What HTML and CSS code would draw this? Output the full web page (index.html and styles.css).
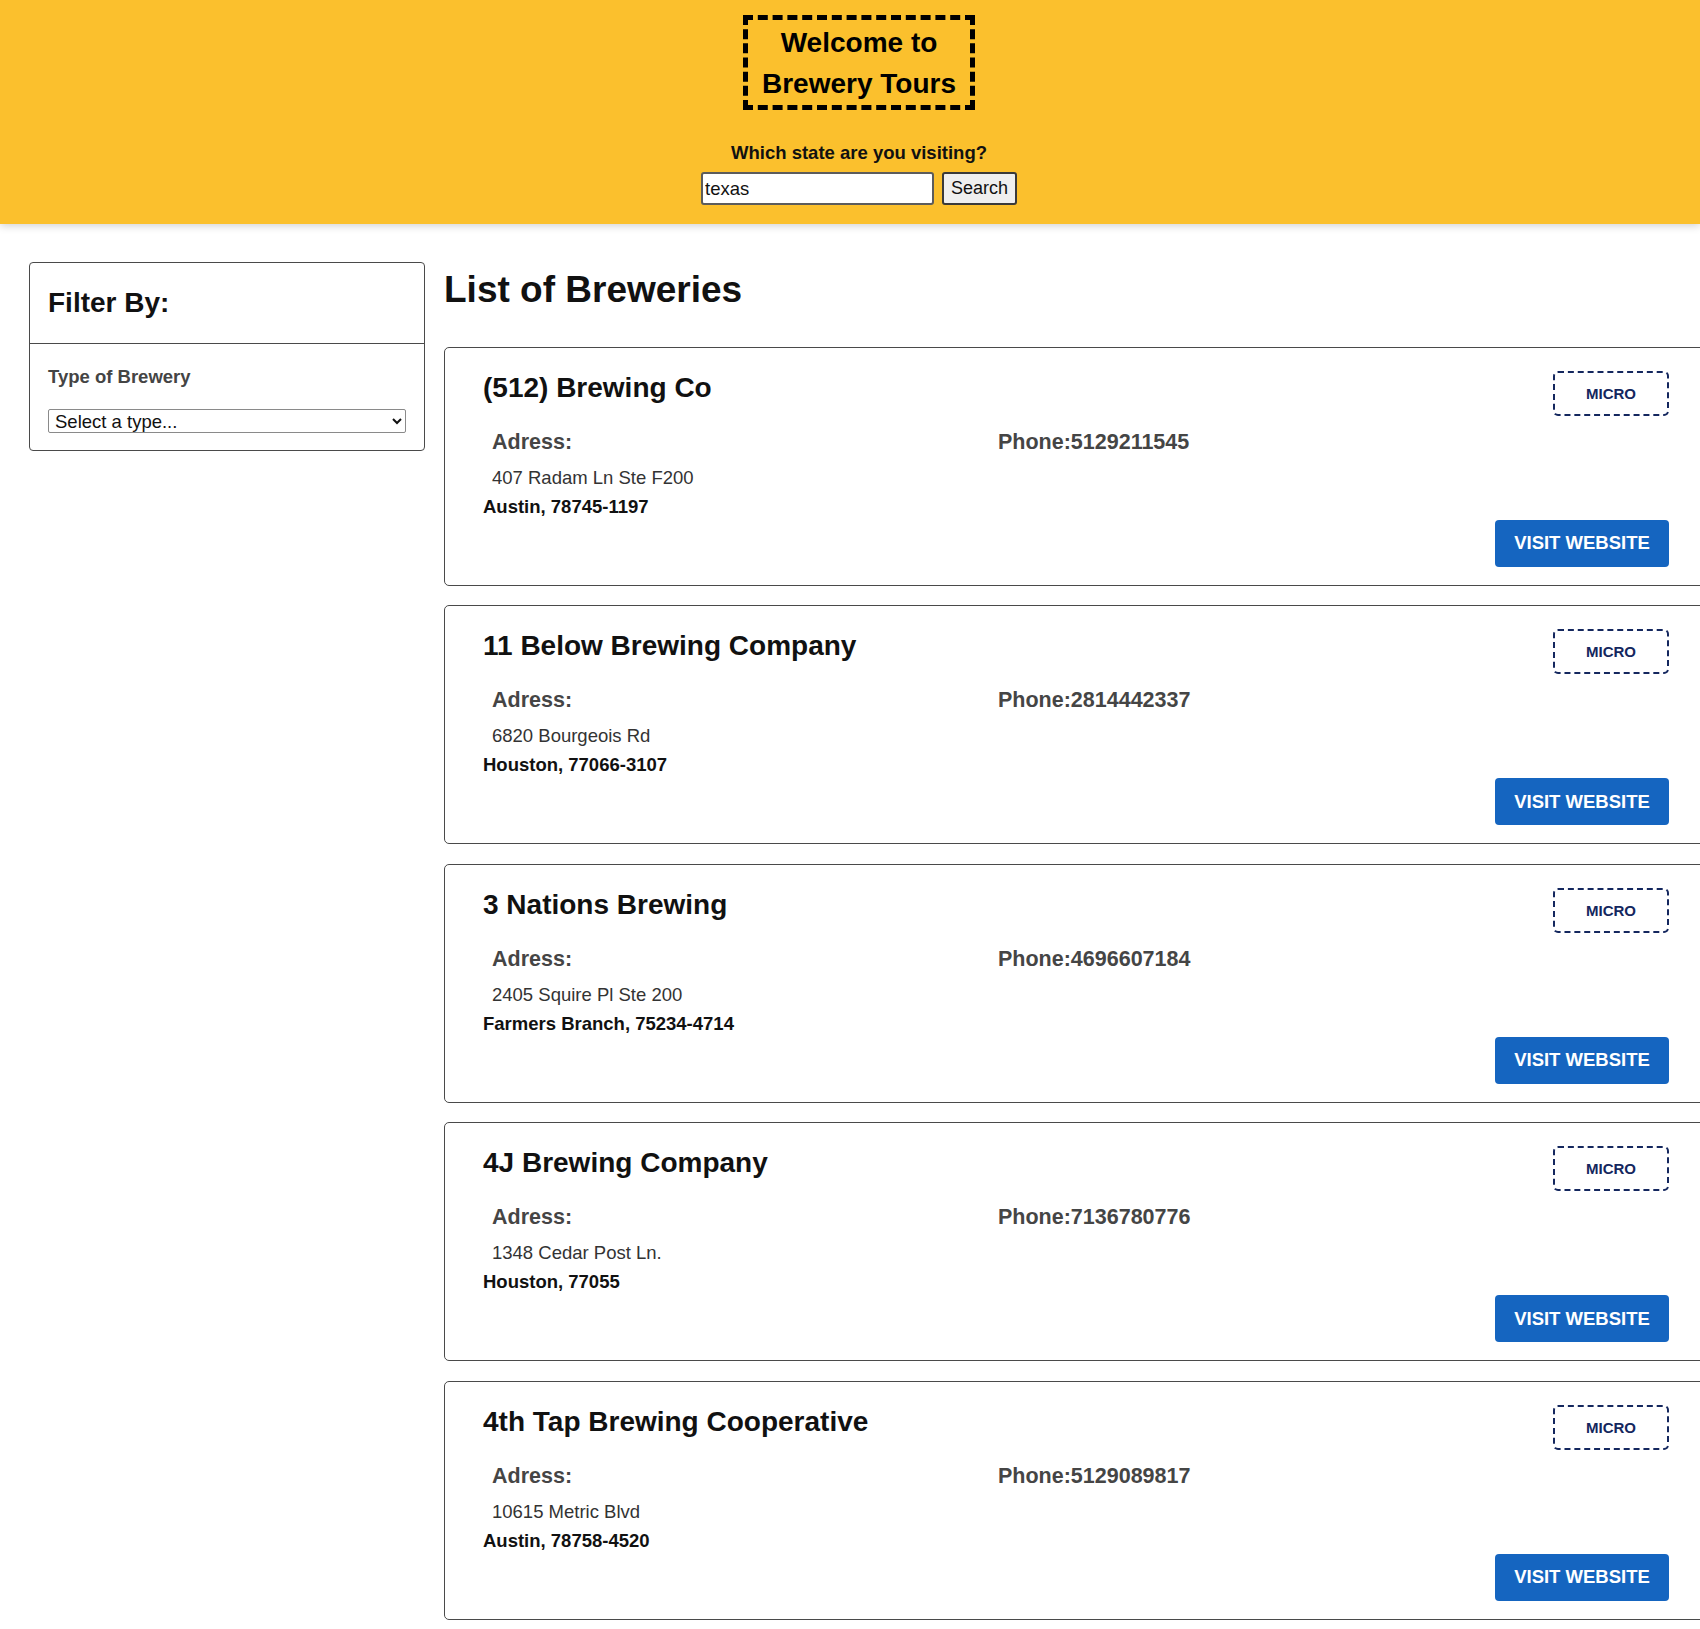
FILE: index.html
```html
<!DOCTYPE html>
<html lang="en">
<head>
<meta charset="utf-8">
<title>Brewery Tours</title>
<link rel="stylesheet" href="styles.css">
</head>
<body>
<header class="banner">
  <h1 class="banner-title">Welcome to Brewery Tours</h1>
  <form class="search">
    <label class="search-label" for="state">Which state are you visiting?</label>
    <div class="search-row">
      <input id="state" class="search-input" type="text" value="texas">
      <button class="search-btn" type="button">Search</button>
    </div>
  </form>
</header>

<div class="layout">
  <aside class="filters">
    <div class="filters-head">
      <h2 class="filters-title">Filter By:</h2>
    </div>
    <div class="filters-body">
      <label class="filters-label" for="type">Type of Brewery</label>
      <select id="type" class="filters-select">
        <option>Select a type...</option>
      </select>
    </div>
  </aside>

  <main class="list">
    <h1 class="list-title">List of Breweries</h1>

    <article class="card">
      <div class="card-main">
        <h2 class="card-name">(512) Brewing Co</h2>
        <div class="card-info">
          <div class="card-cell">
            <h3 class="card-label">Adress:</h3>
            <p class="card-street">407 Radam Ln Ste F200</p>
          </div>
          <div class="card-cell">
            <h3 class="card-label">Phone:5129211545</h3>
          </div>
        </div>
        <p class="card-city">Austin, 78745-1197</p>
      </div>
      <div class="card-side">
        <span class="badge">MICRO</span>
        <a class="visit" href="#">VISIT WEBSITE</a>
      </div>
    </article>

    <article class="card">
      <div class="card-main">
        <h2 class="card-name">11 Below Brewing Company</h2>
        <div class="card-info">
          <div class="card-cell">
            <h3 class="card-label">Adress:</h3>
            <p class="card-street">6820 Bourgeois Rd</p>
          </div>
          <div class="card-cell">
            <h3 class="card-label">Phone:2814442337</h3>
          </div>
        </div>
        <p class="card-city">Houston, 77066-3107</p>
      </div>
      <div class="card-side">
        <span class="badge">MICRO</span>
        <a class="visit" href="#">VISIT WEBSITE</a>
      </div>
    </article>

    <article class="card">
      <div class="card-main">
        <h2 class="card-name">3 Nations Brewing</h2>
        <div class="card-info">
          <div class="card-cell">
            <h3 class="card-label">Adress:</h3>
            <p class="card-street">2405 Squire Pl Ste 200</p>
          </div>
          <div class="card-cell">
            <h3 class="card-label">Phone:4696607184</h3>
          </div>
        </div>
        <p class="card-city">Farmers Branch, 75234-4714</p>
      </div>
      <div class="card-side">
        <span class="badge">MICRO</span>
        <a class="visit" href="#">VISIT WEBSITE</a>
      </div>
    </article>

    <article class="card">
      <div class="card-main">
        <h2 class="card-name">4J Brewing Company</h2>
        <div class="card-info">
          <div class="card-cell">
            <h3 class="card-label">Adress:</h3>
            <p class="card-street">1348 Cedar Post Ln.</p>
          </div>
          <div class="card-cell">
            <h3 class="card-label">Phone:7136780776</h3>
          </div>
        </div>
        <p class="card-city">Houston, 77055</p>
      </div>
      <div class="card-side">
        <span class="badge">MICRO</span>
        <a class="visit" href="#">VISIT WEBSITE</a>
      </div>
    </article>

    <article class="card">
      <div class="card-main">
        <h2 class="card-name">4th Tap Brewing Cooperative</h2>
        <div class="card-info">
          <div class="card-cell">
            <h3 class="card-label">Adress:</h3>
            <p class="card-street">10615 Metric Blvd</p>
          </div>
          <div class="card-cell">
            <h3 class="card-label">Phone:5129089817</h3>
          </div>
        </div>
        <p class="card-city">Austin, 78758-4520</p>
      </div>
      <div class="card-side">
        <span class="badge">MICRO</span>
        <a class="visit" href="#">VISIT WEBSITE</a>
      </div>
    </article>
  </main>
</div>
</body>
</html>
```

FILE: styles.css
```css
html {
  overflow: hidden;
}

body {
  margin: 0;
  font-family: "Liberation Sans", Arial, sans-serif;
  color: #111;
  background: #fff;
}

/* ---------- Header ---------- */
.banner {
  background: #fbc02d;
  padding: 15px 0 19px 18px;
  display: flex;
  flex-direction: column;
  align-items: center;
  box-shadow: 0 2px 8px rgba(0, 0, 0, 0.18);
  position: relative;
  z-index: 1;
}

.banner-title {
  margin: 0;
  width: 206px;
  padding: 1.5px 8px;
  border: 5px dashed #000;
  font-size: 28px;
  line-height: 41px;
  font-weight: 700;
  text-align: center;
  color: #000;
}

.search {
  display: flex;
  flex-direction: column;
  align-items: center;
  margin-top: 32px;
}

.search-label {
  font-size: 18.5px;
  line-height: 21px;
  font-weight: 700;
  color: #111;
}

.search-row {
  display: flex;
  gap: 8px;
  margin-top: 9px;
}

.search-input {
  box-sizing: border-box;
  width: 233px;
  height: 33px;
  border: 2px solid #5c5c5c;
  border-radius: 3px;
  padding: 0 2px;
  font-family: inherit;
  font-size: 18.5px;
  color: #111;
  background: #fff;
}

.search-btn {
  box-sizing: border-box;
  width: 75px;
  height: 33px;
  border: 2px solid #3a3a3a;
  border-radius: 3px;
  background: #efefef;
  font-family: inherit;
  font-size: 18px;
  color: #111;
  padding: 0;
}

/* ---------- Layout ---------- */
.layout {
  display: flex;
  align-items: flex-start;
  gap: 19px;
  padding: 38px 0 0 29px;
}

/* ---------- Filters ---------- */
.filters {
  flex: none;
  width: 396px;
  box-sizing: border-box;
  border: 1px solid #4a4a4a;
  border-radius: 4px;
}

.filters-head {
  padding: 24px 18px;
  border-bottom: 1px solid #4a4a4a;
}

.filters-title {
  margin: 0;
  font-size: 28px;
  line-height: 32px;
  font-weight: 700;
  color: #111;
}

.filters-body {
  display: flex;
  flex-direction: column;
  align-items: flex-start;
  padding: 22px 18px 17px;
}

.filters-label {
  font-size: 18.5px;
  line-height: 21px;
  font-weight: 700;
  color: #444;
}

.filters-select {
  box-sizing: border-box;
  margin-top: 21.5px;
  width: 358px;
  height: 24px;
  padding: 0 2px;
  border: 1px solid #8a8a8a;
  border-radius: 2px;
  background: #fff;
  font-family: inherit;
  font-size: 18.5px;
  color: #111;
}

/* ---------- List ---------- */
.list {
  flex: none;
  width: 1263px;
}

.list-title {
  margin: 7px 0 35.5px 0;
  font-size: 37px;
  line-height: 42px;
  font-weight: 700;
  color: #111;
}

.card {
  box-sizing: border-box;
  height: 239px;
  display: flex;
  border: 1px solid #4a4a4a;
  border-radius: 5px;
  padding: 24px 37px 18px 38px;
  margin-bottom: 19.5px;
}

.card-main {
  flex: 1;
}

.card-name {
  margin: 0;
  font-size: 28px;
  line-height: 32px;
  font-weight: 700;
  color: #111;
}

.card-info {
  display: grid;
  grid-template-columns: 1fr 1fr;
  margin-top: 26px;
}

.card-cell {
  padding-left: 9px;
}

.card-label {
  margin: 0;
  font-size: 21.5px;
  line-height: 25px;
  font-weight: 700;
  color: #454545;
}

.card-street {
  margin: 12px 0 0;
  font-size: 18.5px;
  line-height: 21px;
  color: #333;
}

.card-city {
  margin: 8px 0 0;
  font-size: 18.5px;
  line-height: 21px;
  font-weight: 700;
  color: #111;
}

.card-side {
  flex: none;
  width: 174px;
  display: flex;
  flex-direction: column;
  align-items: flex-end;
  justify-content: space-between;
  margin-top: -1px;
}

.badge {
  box-sizing: border-box;
  width: 116px;
  height: 45px;
  display: flex;
  align-items: center;
  justify-content: center;
  border: 2.5px dashed #14275e;
  border-radius: 5px;
  font-size: 15px;
  font-weight: 700;
  color: #14275e;
}

.visit {
  box-sizing: border-box;
  width: 174px;
  height: 47px;
  display: flex;
  align-items: center;
  justify-content: center;
  background: #1565c0;
  border-radius: 4px;
  color: #fff;
  font-size: 18.5px;
  font-weight: 700;
  text-decoration: none;
}
```
